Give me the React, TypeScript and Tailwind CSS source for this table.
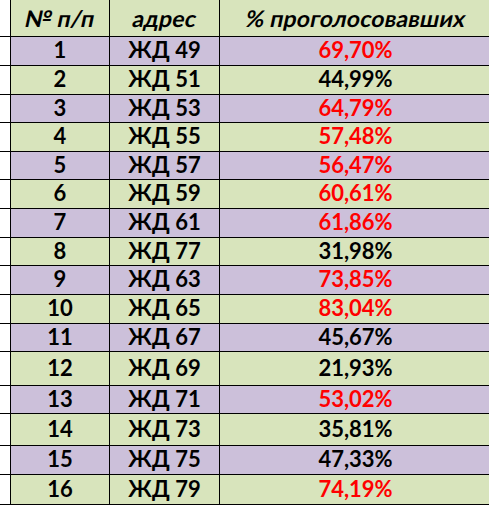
const rows = [
    { n: 1, addr: 'ЖД 49', pct: '69,70%', red: true, h: 'h-[29px]' },
    { n: 2, addr: 'ЖД 51', pct: '44,99%', red: false, h: 'h-[29px]' },
    { n: 3, addr: 'ЖД 53', pct: '64,79%', red: true, h: 'h-[28px]' },
    { n: 4, addr: 'ЖД 55', pct: '57,48%', red: true, h: 'h-[29px]' },
    { n: 5, addr: 'ЖД 57', pct: '56,47%', red: true, h: 'h-[28px]' },
    { n: 6, addr: 'ЖД 59', pct: '60,61%', red: true, h: 'h-[29px]' },
    { n: 7, addr: 'ЖД 61', pct: '61,86%', red: true, h: 'h-[29px]' },
    { n: 8, addr: 'ЖД 77', pct: '31,98%', red: false, h: 'h-[28px]' },
    { n: 9, addr: 'ЖД 63', pct: '73,85%', red: true, h: 'h-[29px]' },
    { n: 10, addr: 'ЖД 65', pct: '83,04%', red: true, h: 'h-[29px]' },
    { n: 11, addr: 'ЖД 67', pct: '45,67%', red: false, h: 'h-[28px]' },
    { n: 12, addr: 'ЖД 69', pct: '21,93%', red: false, h: 'h-[34px]' },
    { n: 13, addr: 'ЖД 71', pct: '53,02%', red: true, h: 'h-[28px]' },
    { n: 14, addr: 'ЖД 73', pct: '35,81%', red: false, h: 'h-[32px]' },
    { n: 15, addr: 'ЖД 75', pct: '47,33%', red: false, h: 'h-[29px]' },
    { n: 16, addr: 'ЖД 79', pct: '74,19%', red: true, h: 'h-[30px]' },
]

// Excel-style italic header: slanted upright glyphs so "п" stays "п"
function HeadCell({ children, className }: { children: string; className: string }) {
    return (
        <div className={`border-l border-black bg-[#d8e4bc] flex items-center justify-center ${className}`}>
            <span className="inline-block -skew-x-12 text-[23px] tracking-[0.2px]">{children}</span>
        </div>
    )
}

export default function App() {
    return (
        <div className="w-[489px] h-[505px] overflow-hidden bg-white text-black font-['Lato','Noto_Sans',sans-serif] text-[22px] font-bold leading-none">
            <div className="w-[491px]">
                <div className="flex h-[37px] border-b border-black">
                    <div className="w-[10px] shrink-0" />
                    <HeadCell className="w-[99px] shrink-0">№ п/п</HeadCell>
                    <HeadCell className="w-[110px] shrink-0">адрес</HeadCell>
                    <HeadCell className="flex-1">% проголосовавших</HeadCell>
                </div>
                {rows.map((r, i) => {
                    const bg = i % 2 === 0 ? 'bg-[#ccc0da]' : 'bg-[#d8e4bc]'
                    return (
                        <div key={r.n} className={`flex border-b border-black ${r.h}`}>
                            <div className="w-[10px] shrink-0" />
                            <div className={`w-[99px] shrink-0 border-l border-black flex items-center justify-center pb-[2px] ${bg}`}>
                                {r.n}
                            </div>
                            <div className={`w-[110px] shrink-0 border-l border-black flex items-center justify-center pb-[2px] ${bg}`}>
                                {r.addr}
                            </div>
                            <div
                                className={`flex-1 border-l border-black flex items-center justify-center pb-[2px] ${bg} ${
                                    r.red ? 'text-[#ff0000]' : ''
                                }`}
                            >
                                {r.pct}
                            </div>
                        </div>
                    )
                })}
            </div>
        </div>
    )
}
